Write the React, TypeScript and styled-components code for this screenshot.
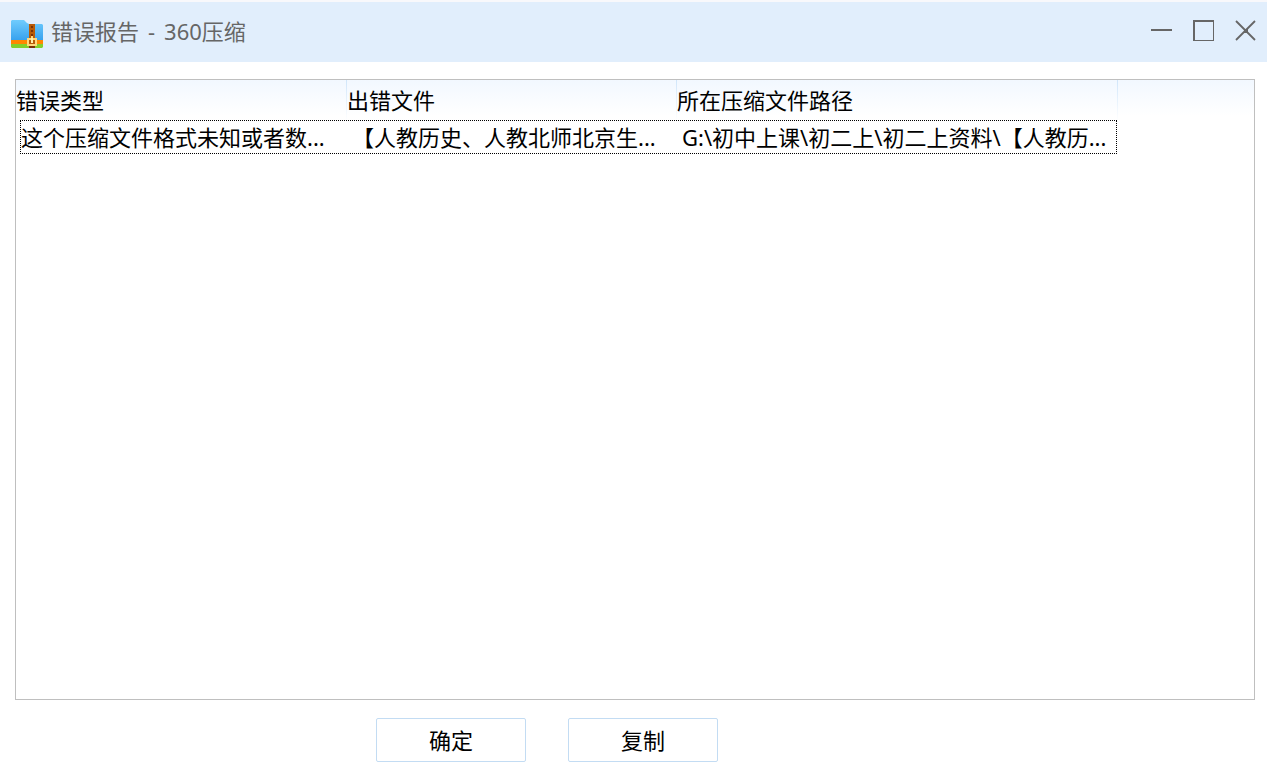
import React from 'react';
import styled, { createGlobalStyle } from 'styled-components';

const GlobalStyle = createGlobalStyle`
  *, *::before, *::after { box-sizing: border-box; }
  body {
    margin: 0;
    background: #fff;
    color: #000;
    font: 22px/30px "Noto Sans", "Noto Sans CJK SC", sans-serif;
  }
`;

const Window = styled.div`
  display: flex;
  flex-direction: column;
  min-height: 100vh;
`;

const TitleBar = styled.header`
  display: flex;
  align-items: center;
  gap: 8px;
  height: 62px;
  padding: 4px 10px 0 11px;
  border-top: 2px solid #f8f8fb;
  background: #e1eefc;
`;

const Title = styled.h1`
  display: flex;
  flex: 1;
  gap: 9px;
  margin: 0;
  padding-bottom: 6px;
  color: #666;
  font-size: 22px;
  font-weight: 400;
`;

const WindowControls = styled.div`
  display: flex;
  gap: 20px;
  padding-bottom: 6px;
`;

const ControlButton = styled.button`
  display: flex;
  padding: 0;
  border: 0;
  background: none;
  color: #666;
`;

const ReportPanel = styled.main`
  flex: 1;
  margin: 17px 12px 0 15px;
  border: 1px solid #bfbfbf;
  background: linear-gradient(#f2f8ff, #fff) 0 0 / 100% 36px no-repeat;
`;

const ReportTable = styled.table`
  table-layout: fixed;
  width: 1102px;
  border-collapse: separate;
  border-spacing: 0;
`;

const Column = styled.col<{ $width: number }>`
  width: ${({ $width }) => $width}px;
`;

const HeaderCell = styled.th`
  height: 40px;
  padding: 0;
  border-right: 1px solid;
  border-image: linear-gradient(#cfe5fa, #fff) 1;
  font-weight: 400;
  text-align: left;
`;

const SelectedRow = styled.tr`
  position: relative;

  &::after {
    content: "";
    position: absolute;
    inset: 0 1px 0 4px;
    border: 1px dotted #000;
    pointer-events: none;
  }
`;

const Cell = styled.td`
  height: 34px;
  padding: 0 5px;
  overflow: hidden;
  text-overflow: ellipsis;
  white-space: nowrap;
`;

const Actions = styled.footer`
  display: flex;
  gap: 42px;
  padding: 18px 15px 10px 376px;
`;

const ActionButton = styled.button`
  width: 150px;
  height: 44px;
  padding: 0;
  border: 1px solid #c3dcf3;
  border-radius: 2px;
  background: #fff;
  color: #000;
  font: inherit;
`;

const ArchiveIcon = () => (
  <svg width="32" height="28" viewBox="0 0 32 28" aria-hidden="true">
    <defs>
      <linearGradient id="folder" x1="0" y1="0" x2="0" y2="1">
        <stop offset="0" stopColor="#70ccfd" />
        <stop offset="1" stopColor="#35a0ee" />
      </linearGradient>
    </defs>
    <path d="M1 0h12l3 3 2 1h13l1 1v16H0V1z" fill="url(#folder)" />
    <path d="M0 20h32v4H0z" fill="#ff8700" />
    <path d="M0 24h32v3l-1 1H1l-1-1z" fill="#83cf2c" />
    <path d="M18 4h6v24h-6z" fill="#b85b07" />
    <path d="M20 6h2v2h-2zM20 10h2v2h-2zM20 14h2v2h-2zM18 24h6v4h-6z" fill="#7b3205" />
    <path d="M20 16h2v2h4v8H16v-8h4zM18 20v4h6v-4z" fill="#ffd77c" fillRule="evenodd" />
    <path d="M20 18h2v5h-2z" fill="#fff0ad" />
  </svg>
);

const columns = [
  { label: '错误类型', width: 331 },
  { label: '出错文件', width: 330 },
  { label: '所在压缩文件路径', width: 441 },
];

const cells = [
  '这个压缩文件格式未知或者数...',
  '【人教历史、人教北师北京生...',
  'G:\\初中上课\\初二上\\初二上资料\\【人教历...',
];

export default function App() {
  return (
    <Window>
      <GlobalStyle />
      <TitleBar>
        <ArchiveIcon />
        <Title>
          <span>错误报告</span>
          <span>-</span>
          <span>360压缩</span>
        </Title>
        <WindowControls>
          <ControlButton aria-label="最小化">
            <svg width="22" height="22"><path d="M0 9h21v2H0z" fill="currentColor" /></svg>
          </ControlButton>
          <ControlButton aria-label="最大化">
            <svg width="22" height="22">
              <path d="M0 0h21v21H0zM2 2v18h18V2z" fill="currentColor" fillRule="evenodd" />
            </svg>
          </ControlButton>
          <ControlButton aria-label="关闭">
            <svg width="22" height="22">
              <path d="M1 1l19 19M20 1L1 20" stroke="currentColor" strokeWidth="1.8" />
              <path d="M9 9h4v4H9z" fill="currentColor" />
            </svg>
          </ControlButton>
        </WindowControls>
      </TitleBar>
      <ReportPanel>
        <ReportTable>
          <colgroup>
            {columns.map((c) => <Column key={c.label} $width={c.width} />)}
          </colgroup>
          <thead>
            <tr>
              {columns.map((c) => <HeaderCell key={c.label} scope="col">{c.label}</HeaderCell>)}
            </tr>
          </thead>
          <tbody>
            <SelectedRow>
              {cells.map((text) => <Cell key={text}>{text}</Cell>)}
            </SelectedRow>
          </tbody>
        </ReportTable>
      </ReportPanel>
      <Actions>
        <ActionButton>确定</ActionButton>
        <ActionButton>复制</ActionButton>
      </Actions>
    </Window>
  );
}
